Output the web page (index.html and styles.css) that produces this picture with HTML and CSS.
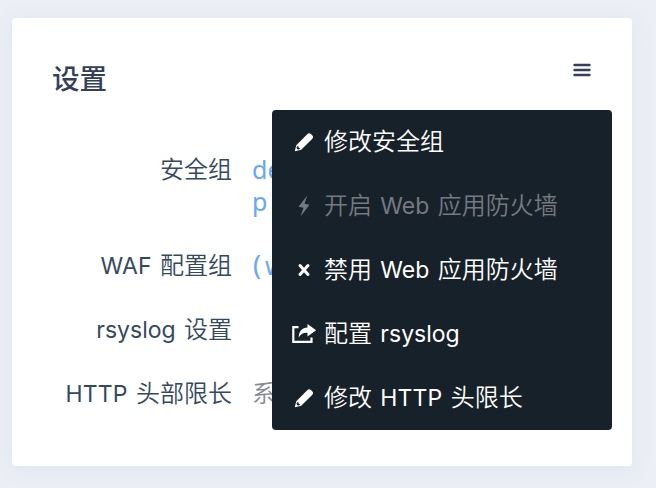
FILE: index.html
```html
<!DOCTYPE html>
<html lang="zh-CN">
<head>
<meta charset="utf-8">
<title>设置</title>
<link rel="stylesheet" href="styles.css">
</head>
<body>
<main class="card">
  <header class="card-header">
    <h1 class="title">设置</h1>
    <svg class="menu-icon" viewBox="0 0 18 14"><path d="M1.5 2h15M1.5 7h15M1.5 12h15"/></svg>
  </header>
  <dl class="settings">
    <dt>安全组</dt><dd class="code">de<br>p</dd>
    <dt><span class="latin caps">WAF</span> 配置组</dt><dd class="code"><span class="paren">(</span>w</dd>
    <dt><span class="latin">rsyslog</span> 设置</dt><dd></dd>
    <dt><span class="latin caps">HTTP</span> 头部限长</dt><dd class="muted">系</dd>
  </dl>
  <ul class="menu">
    <li><svg class="icon" viewBox="0 0 24 24"><path d="M2.7 21.3l1.6-6.1L15.2 4.3q2-2 3.8-.2l1.2 1.2q1.8 1.8-.1 3.8L9.2 19.8z"/><path class="cut" d="M4.9 16.2l1.6.3.4 1.4 1.4.4-.8.9-1.5.4-1.4-1.4z"/></svg><span>修改安全组</span></li>
    <li class="disabled"><svg class="icon" viewBox="0 0 24 24"><path d="M15.3 1.5L6.5 12.7l5 1-3 8.8 9-11.8-5-1z"/></svg><span>开启 <span class="latin">Web</span> 应用防火墙</span></li>
    <li><svg class="icon" viewBox="0 0 24 24"><path class="cross" d="M8 7.5l8 9M16 7.5l-8 9"/></svg><span>禁用 <span class="latin">Web</span> 应用防火墙</span></li>
    <li><svg class="icon" viewBox="0 0 24 24"><path class="box" d="M6.5 5.2H1.3v14.6h18.2v-4.2"/><path d="M15.5 2.1l8.6 6.2-8.6 6.1v-3.6c-4.2-.2-6.4 1-8.8 4.6.3-6 3.1-9.4 8.8-9.8z"/></svg><span>配置 <span class="latin">rsyslog</span></span></li>
    <li><svg class="icon" viewBox="0 0 24 24"><path d="M2.7 21.3l1.6-6.1L15.2 4.3q2-2 3.8-.2l1.2 1.2q1.8 1.8-.1 3.8L9.2 19.8z"/><path class="cut" d="M4.9 16.2l1.6.3.4 1.4 1.4.4-.8.9-1.5.4-1.4-1.4z"/></svg><span>修改 <span class="latin caps">HTTP</span> 头限长</span></li>
  </ul>
</main>
</body>
</html>
```
FILE: styles.css
```css
* { box-sizing: border-box; }
body {
  margin: 0;
  height: 488px;
  padding: 18px 24px 22px 12px;
  overflow: hidden;
  background: #eceff5;
  color: #34495e;
  font: 300 24px/32px "Noto Sans CJK SC", sans-serif;
}
.card {
  position: relative;
  height: 448px;
  border-radius: 4px;
  background: #fff;
  box-shadow: 0 4px 20px rgba(215, 223, 240, .65);
}
.card-header {
  display: flex;
  justify-content: space-between;
  padding: 39px 41px 0 40px;
}
.title {
  margin: 0;
  color: #343f5b;
  font-size: 27.5px;
  font-weight: 500;
  line-height: 40px;
}
.menu-icon {
  width: 18px;
  height: 14px;
  margin-top: 6px;
  stroke: #36405e;
  stroke-width: 2.4;
  stroke-linecap: round;
}
.settings {
  display: grid;
  grid-template-columns: 180px 60px;
  column-gap: 20px;
  row-gap: 32px;
  margin: 55px 0 0 40px;
  font-weight: 350;
  word-spacing: 3px;
}
dt { text-align: right; white-space: nowrap; }
dd { margin: 0; min-height: 32px; }
.code {
  height: 0;
  padding-top: 1px;
  color: #65a8fb;
  font: 400 25px/32px "Noto Sans", sans-serif;
}
.code:first-of-type { height: 64px; }
.paren { margin: 0 4px 0 1px; font-size: 27px; line-height: 0; }
.muted { color: #858a91; }
.latin {
  font-family: Inter, sans-serif;
  font-size: 23px;
  font-weight: 400;
  line-height: 0;
}
.caps { letter-spacing: .15px; }
.menu {
  position: absolute;
  top: 92px;
  left: 260px;
  width: 340px;
  height: 320px;
  margin: 0;
  padding: 0 20px;
  list-style: none;
  border-radius: 4px;
  background: #17212a;
  color: #fff;
  font-weight: 350;
  word-spacing: 3px;
}
.menu li {
  display: flex;
  align-items: center;
  gap: 8px;
  height: 64px;
  white-space: nowrap;
}
.menu li > span { margin-top: -4px; }
.icon { width: 24px; height: 24px; fill: currentColor; overflow: visible; }
.cut { fill: #17212a; }
.cross { stroke: currentColor; stroke-width: 3; stroke-linecap: round; }
.box { fill: none; stroke: currentColor; stroke-width: 2.2; }
.disabled { color: #757a80; }
```
